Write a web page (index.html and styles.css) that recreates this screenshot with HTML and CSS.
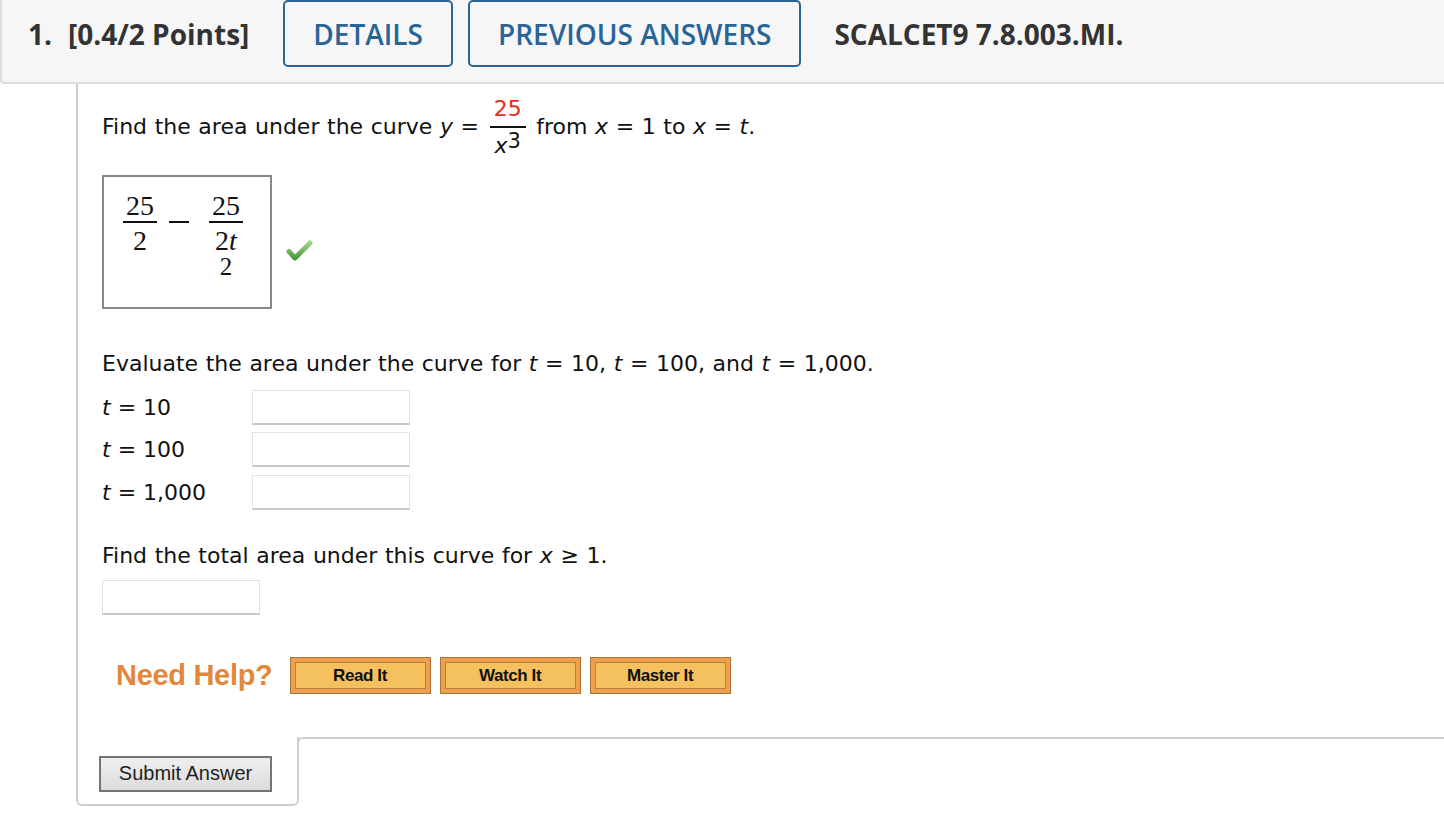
FILE: index.html
```html
<!DOCTYPE html>
<html>
<head>
  <meta charset="UTF-8">
  <title>SCALCET9 7.8.003.MI.</title>
  <link rel="stylesheet" href="styles.css">
</head>
<body>

<div class="q-header">
  <span class="q-num">1.</span>
  <span class="q-points">[0.4/2 Points]</span>
  <button class="hdr-btn">DETAILS</button>
  <button class="hdr-btn">PREVIOUS ANSWERS</button>
  <span class="q-code">SCALCET9 7.8.003.MI.</span>
</div>

<div class="q-body">
  <p class="q-prompt">Find the area under the curve <i>y</i> = <span class="frac"><span class="frac-top red">25</span><span class="frac-bot"><i>x</i><sup>3</sup></span></span> from <i>x</i> = 1 to <i>x</i> = <i>t</i>.</p>

  <div class="answer-row">
    <div class="math-box">
      <span class="mfrac">
        <span class="mtop">25</span>
        <span class="mbot">2</span>
      </span>
      <span class="mminus"></span>
      <span class="mfrac">
        <span class="mtop">25</span>
        <span class="mbot">2<i>t</i></span>
        <span class="msub">2</span>
      </span>
    </div>
    <svg class="check" width="27" height="24" viewBox="0 0 27 24">
      <defs>
        <linearGradient id="chk" x1="0" y1="0" x2="0" y2="1">
          <stop offset="0" stop-color="#9ad487"/>
          <stop offset="1" stop-color="#4e9a3c"/>
        </linearGradient>
      </defs>
      <path d="M3 12.5 L9 19 L24 4" fill="none" stroke="url(#chk)" stroke-width="5" stroke-linecap="round" stroke-linejoin="round"/>
    </svg>
  </div>

  <p class="q-text eval">Evaluate the area under the curve for <i>t</i> = 10, <i>t</i> = 100, and <i>t</i> = 1,000.</p>

  <div class="t-rows">
    <div class="t-row"><span class="t-label"><i>t</i> = 10</span><input type="text" class="ans"></div>
    <div class="t-row"><span class="t-label"><i>t</i> = 100</span><input type="text" class="ans"></div>
    <div class="t-row"><span class="t-label"><i>t</i> = 1,000</span><input type="text" class="ans"></div>
  </div>

  <p class="q-text total">Find the total area under this curve for <i>x</i> &ge; 1.</p>
  <input type="text" class="ans">

  <div class="help-row">
    <span class="need-help">Need Help?</span>
    <button class="help-btn"><span>Read It</span></button>
    <button class="help-btn"><span>Watch It</span></button>
    <button class="help-btn"><span>Master It</span></button>
  </div>
</div>

<div class="q-foot">
  <div class="submit-tab">
    <button class="submit-btn">Submit Answer</button>
  </div>
  <div class="foot-rest"></div>
</div>

</body>
</html>
```

FILE: styles.css
```css
body {
	margin: 0;
	background: white;
	font-family: "DejaVu Sans", Verdana, sans-serif;
	color: #111;
}

/* Question header bar */
.q-header {
	display: flex;
	align-items: center;
	height: 67px;
	padding: 0 0 15px 26px;
	background-color: #f6f6f6;
	border-left: 2px solid #dcdcdc;
	border-bottom: 2px solid #dcdcdc;
	border-bottom-left-radius: 4px;
	font-family: "Open Sans", sans-serif;
	font-size: 28px;
	font-weight: 700;
	color: #333;
}

.q-points {
	margin-left: 16px;
	margin-right: 34px;
}

.hdr-btn {
	height: 67px;
	margin-right: 15px;
	padding: 0 28px;
	background: transparent;
	border: 2px solid #2a6496;
	border-radius: 5px;
	font-family: "Open Sans", sans-serif;
	font-size: 28px;
	font-weight: 600;
	color: #2a6496;
	align-self: flex-start;
}

.q-code {
	margin-left: 18px;
}

/* Question body, with the grey rule down its left side */
.q-body {
	margin-left: 76px;
	padding: 14px 0 43px 24px;
	border-left: 2px solid #cfcfcf;
}

.q-prompt {
	margin: 0;
	font-size: 22px;
	word-spacing: 0.6px;
	line-height: 26px;
}

.frac {
	display: inline-block;
	vertical-align: middle;
	margin: 0 3px;
	text-align: center;
	line-height: 1;
	word-spacing: 0;
}

.frac-top {
	display: block;
	padding: 0 4px 6px;
	border-bottom: 2px solid #111;
}

.frac-bot {
	display: block;
	padding-top: 7px;
}

.frac-bot sup {
	font-size: 21px;
	vertical-align: 5px;
	line-height: 0;
}

.red {
	color: #e8291c;
}

/* Typeset answer box */
.answer-row {
	display: flex;
	align-items: center;
	margin-top: 18px;
}

.math-box {
	width: 170px;
	height: 134px;
	border: 2px solid #888;
	display: flex;
	align-items: flex-start;
	padding: 15px 0 0 19px;
	box-sizing: border-box;
	font-family: "Liberation Serif", "Times New Roman", serif;
	font-size: 28px;
}

.mfrac {
	display: inline-flex;
	flex-direction: column;
	align-items: center;
	line-height: 1;
}

.mtop {
	padding: 0 3px 1px;
	border-bottom: 2px solid #111;
}

.mbot {
	padding-top: 4px;
}

.msub {
	font-size: 25px;
	margin-top: -1px;
}

/* minus sign drawn as a rule so it sits on the fraction axis */
.mminus {
	width: 20px;
	height: 2px;
	margin: 29px 20px 0 12px;
	background: #111;
}

.check {
	margin-left: 14px;
	margin-top: 18px;
}

.q-text {
	margin: 0;
	font-size: 22px;
	word-spacing: 0.6px;
	line-height: 26px;
}

.eval {
	margin-top: 42px;
}

.t-rows {
	margin-top: 9px;
}

.t-row {
	display: flex;
	align-items: center;
	height: 42.5px;
}

.t-label {
	width: 150px;
	font-size: 22px;
}

.ans {
	width: 158px;
	height: 35px;
	box-sizing: border-box;
	border: 1px solid #e2e2e2;
	border-bottom: 2px solid #c8c8c8;
	background: white;
}

.total {
	margin-top: 29px;
	margin-bottom: 11px;
}

/* Help row */
.help-row {
	display: flex;
	align-items: center;
	gap: 9px;
	margin-top: 42px;
	padding-left: 14px;
}

.need-help {
	margin-right: 8px;
	font-family: "Liberation Sans", Arial, sans-serif;
	font-size: 29px;
	font-weight: 700;
	color: #e3883a;
	letter-spacing: -0.3px;
}

.help-btn {
	width: 141px;
	height: 37px;
	padding: 4px;
	background: #f0a04c;
	border: 1px solid #a8733b;
	box-sizing: border-box;
}

.help-btn span {
	display: block;
	height: 100%;
	background: #f5c05e;
	border: 1px solid #b8803f;
	box-sizing: border-box;
	font-family: "Liberation Sans", Arial, sans-serif;
	font-size: 17px;
	font-weight: 700;
	line-height: 25px;
	color: #111;
	letter-spacing: -0.4px;
}

/* Footer tab holding the submit button */
.q-foot {
	display: flex;
	margin-left: 76px;
}

.submit-tab {
	padding: 19px 25px 12px 21px;
	border: 2px solid #cfcfcf;
	border-top: none;
	border-radius: 0 0 6px 6px;
}

.foot-rest {
	flex: 1;
	height: 12px;
	margin-left: -2px;
	border-top: 2px solid #cfcfcf;
	border-left: 2px solid #cfcfcf;
	border-top-left-radius: 6px;
}

.submit-btn {
	width: 173px;
	height: 36px;
	background: linear-gradient(#efefef, #dcdcdc);
	border: 2px solid #757575;
	font-family: "Liberation Sans", Arial, sans-serif;
	font-size: 20px;
	color: #222;
}
```
